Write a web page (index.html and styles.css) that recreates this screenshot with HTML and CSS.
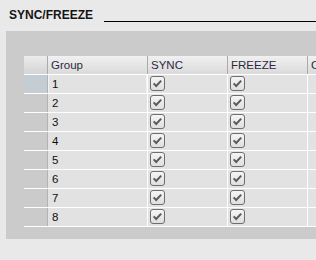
FILE: index.html
```
<!DOCTYPE html>
<html lang="en">
<head>
    <meta charset="UTF-8">
    <meta name="viewport" content="width=device-width, initial-scale=1.0">
    <title>SYNC/FREEZE</title>
    <link rel="stylesheet" href="styles.css">
</head>
<body>

<div class="heading">
    <span class="title">SYNC/FREEZE</span>
    <span class="rule"></span>
</div>

<!-- group table -->
<div class="panel">
    <div class="grid" id="grid">
        <div class="row head">
            <div class="cell rh"></div>
            <div class="cell">Group</div>
            <div class="cell">SYNC</div>
            <div class="cell">FREEZE</div>
            <div class="cell">Comment</div>
        </div>
    </div>
</div>

<script>
    const grid = document.getElementById("grid");
    const box = '<svg width="15" height="15" viewBox="0 0 15 15">' +
        '<defs><linearGradient id="g" x1="0" y1="0" x2="0" y2="1">' +
        '<stop offset="0" stop-color="#f6f6f6"/><stop offset="1" stop-color="#dedede"/></linearGradient></defs>' +
        '<rect x="0.5" y="0.5" width="14" height="14" rx="2.5" fill="url(#g)" stroke="#6e6e6e"/>' +
        '<path d="M3.6 7.4 L6.2 10 L11.2 4.6" fill="none" stroke="#5c5c5c" stroke-width="2"/></svg>';

    // one row per group
    for (let i = 1; i <= 8; i++) {
        const row = document.createElement("div");
        row.className = i === 1 ? "row sel" : "row";
        row.innerHTML =
            '<div class="cell rh"></div>' +
            '<div class="cell num">' + i + '</div>' +
            '<div class="cell chk">' + box + '</div>' +
            '<div class="cell chk">' + box + '</div>' +
            '<div class="cell"></div>';
        grid.appendChild(row);
    }
</script>

</body>
</html>
```

FILE: styles.css
```
html, body {
    margin: 0;
    overflow: hidden;
}
body {
    background: #e9e9e9;
    font-family: "Liberation Sans", Arial, sans-serif;
    color: #111;
}

/* title with a rule to the right */
.heading {
    display: flex;
    height: 22px;
    padding: 8px 0 0 9px;
    box-sizing: border-box;
}
.title {
    font-size: 12px;
    font-weight: bold;
    line-height: 14px;
    color: #141414;
}
.rule {
    flex: 1;
    margin-left: 11px;
    border-bottom: 1px solid #000;
}

.panel {
    margin: 9px 0 0 6px;
    height: 208px;
    padding: 25px 0 0 18px;
    box-sizing: border-box;
    background: #cbcbcb;
    overflow: hidden;
}

.grid {
    width: 400px;
}
.row {
    display: grid;
    grid-template-columns: 24px 100px 80px 80px 116px;
    height: 19px;
    border-bottom: 1px solid #fff;
    box-sizing: border-box;
}
.cell {
    box-sizing: border-box;
    border-right: 1px solid #fff;
    background: #e2e2e2;
    font-size: 11.5px;
    line-height: 18px;
    padding-left: 3px;
    white-space: nowrap;
    overflow: hidden;
}
.cell.rh {
    background: #cbcbcb;
    border-right-color: #b3b3b3;
}
.row.sel .cell.rh {
    background: #c4ccd4;
}
.row.sel .num {
    box-shadow: inset 1px 0 0 #f2f2f2, inset -1px 0 0 #f2f2f2;
}
.num {
    padding-left: 4px;
}
.chk {
    padding: 1px 0 0 2px;
    line-height: 0;
}

/* header */
.row.head {
    height: 18px;
    border-bottom: 1px solid #fff;
    box-sizing: content-box;
}
.head .cell {
    background: linear-gradient(#f1f1f1, #dadada);
    border-right-color: #aaa;
    color: #2c2840;
    line-height: 18px;
}
.head .cell.rh {
    background: linear-gradient(#ececec, #d4d4d4);
}
```
